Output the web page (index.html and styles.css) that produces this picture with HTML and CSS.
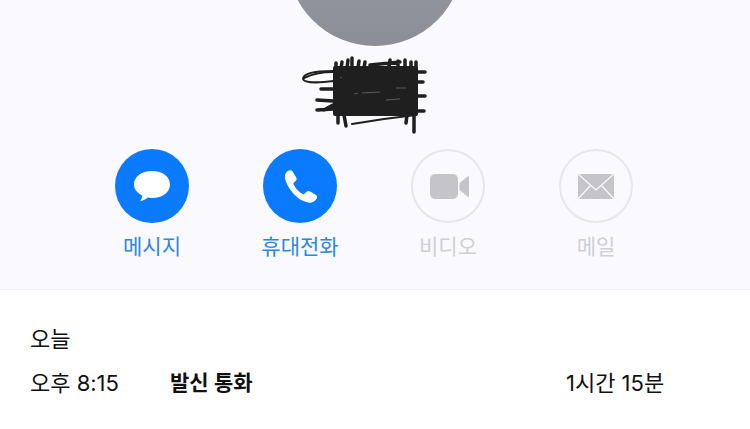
FILE: index.html
```html
<!DOCTYPE html>
<html lang="ko">
<head>
    <meta charset="UTF-8">
    <meta name="viewport" content="width=device-width, initial-scale=1.0">
    <title>통화 기록</title>
    <link rel="stylesheet" href="styles.css">
</head>
<body>
    <div class="contact-header">
        <div class="avatar"></div>
        <svg class="scribble" width="130" height="80" viewBox="0 0 130 80">
            <rect x="33" y="11" width="85" height="50" rx="2" fill="#1f1f1f"/>
            <g fill="none" stroke="#1f1f1f" stroke-width="3.5" stroke-linecap="round">
                <path d="M36 13 L36 8 M41 13 L42 7 M47 13 L48 5 M52 13 L52 3 M58 13 L59 6 M64 13 L65 7 M70 10 L100 7 M89 12 L90 5 M98 12 L98 6 M105 12 L105 5 M111 12 L111 7 M116 13 L116 7"/>
                <path d="M116 17 L125 17 M116 27 L123 27 M116 41 L125 41 M116 56 L124 56"/>
                <path d="M33 34 L21 34 M33 46 L17 45 M33 54 L17 55 M33 50 L24 55"/>
                <path d="M38 60 L38 68 M44 60 L46 71"/>
                <path d="M107 60 L106 68 M114 58 L114 77"/>
            </g>
            <g fill="none" stroke="#1f1f1f" stroke-width="2" stroke-linecap="round">
                <path d="M33 16 C16 16 3 18 3 24 C4 28 18 28 34 26"/>
                <path d="M4 23 C12 19 24 17 33 17"/>
                <path d="M52 69 L84 64 L116 60"/>
            </g>
            <g fill="none" stroke="#6b6b6b" stroke-width="0.8">
                <path d="M40 22 L42 23 M54 39 L58 38 M62 38 L80 37 M96 33 L106 33 M86 45 L100 44"/>
            </g>
        </svg>
        <div class="actions">
            <div class="action">
                <div class="action-icon active">
                    <svg width="40" height="38" viewBox="0 0 40 38">
                        <path d="M20 4 C31 4 38 10 38 17.5 C38 25 31 31 20 31 C18.4 31 17 30.9 15.6 30.6 C13.5 32.6 10.5 34 8 34.2 C9.4 32.5 10.2 30 10.2 28.4 C5 26 2 22 2 17.5 C2 10 9 4 20 4 Z" fill="#fff"/>
                    </svg>
                </div>
                <span class="action-label">메시지</span>
            </div>
            <div class="action">
                <div class="action-icon active">
                    <svg width="40" height="40" viewBox="0 0 36 36">
                        <path d="M7 4.6 C8.2 3.6 10 3.4 11 4.6 L14.6 10.4 C15.3 11.6 15 12.8 14 13.6 L12.4 15 C12 15.4 12 16 12.2 16.5 C14 20.4 16.4 23 20.4 25.2 C21 25.5 21.6 25.4 22 25 L23.6 23.3 C24.5 22.4 25.6 22.2 26.7 22.8 L32.3 26 C33.6 26.8 33.6 28.4 32.8 29.6 C31.2 32 28.6 33.4 26 33 C20 32 14.6 28.4 10.6 23 C6.8 18 4.4 13 4.4 9.4 C4.4 7.6 5.4 5.8 7 4.6 Z" fill="#fff"/>
                    </svg>
                </div>
                <span class="action-label">휴대전화</span>
            </div>
            <div class="action disabled">
                <div class="action-icon">
                    <svg class="video-icon" width="39" height="25" viewBox="0 0 39 25">
                        <rect x="0" y="0" width="28" height="25" rx="5" fill="#c4c4c9"/>
                        <path d="M29.5 9 L37.5 2.4 C38.2 1.9 39 2.3 39 3.2 L39 21.8 C39 22.7 38.2 23.1 37.5 22.6 L29.5 16 Z" fill="#c4c4c9"/>
                    </svg>
                </div>
                <span class="action-label">비디오</span>
            </div>
            <div class="action disabled">
                <div class="action-icon">
                    <svg width="36" height="25" viewBox="0 0 36 25">
                        <rect width="36" height="25" fill="#c4c4c9"/>
                        <path d="M0 0 L18 16 L36 0 M0 25 L12 12 M36 25 L24 12" fill="none" stroke="#f9f9fe" stroke-width="1.3"/>
                    </svg>
                </div>
                <span class="action-label">메일</span>
            </div>
        </div>
    </div>
    <div class="call-history">
        <div class="history-date">오늘</div>
        <div class="history-row">
            <span class="call-time">오후 8:15</span>
            <span class="call-type">발신 통화</span>
            <span class="call-length">1시간 15분</span>
        </div>
    </div>
</body>
</html>
```
FILE: styles.css
```css
body {
    font-family: "Inter", "Noto Sans CJK KR", sans-serif;
    background-color: #fff;
    color: #111;
    margin: 0;
    height: 429px;
    overflow: hidden;
}
.contact-header {
    background-color: #f9f9fe;
    border-bottom: 1px solid #f0f0f4;
    height: 289px;
    overflow: hidden;
    display: flex;
    flex-direction: column;
    align-items: center;
}
.avatar {
    width: 176px;
    height: 176px;
    flex-shrink: 0;
    margin-top: -130px;
    border-radius: 50%;
    background: linear-gradient(#a5a6ad, #8b8d97);
}
.scribble {
    display: block;
    flex-shrink: 0;
    margin-top: 9px;
    margin-right: 20px;
}
.actions {
    display: flex;
    margin-top: 14px;
    margin-right: 2px;
}
.action {
    width: 148px;
    display: flex;
    flex-direction: column;
    align-items: center;
}
.action-icon {
    width: 74px;
    height: 74px;
    box-sizing: border-box;
    border: 2px solid #e6e6eb;
    border-radius: 50%;
    display: flex;
    justify-content: center;
    align-items: center;
}
.action-icon.active {
    background-color: #0a7aff;
    border: none;
}
.video-icon {
    margin-left: 2px;
}
.action-label {
    margin-top: 10px;
    font-size: 21px;
    line-height: 28px;
    color: #2a87e6;
}
.disabled .action-label {
    color: #cfcfd4;
}
.call-history {
    padding: 35px 30px 0;
    font-size: 22px;
}
.history-date {
    line-height: 28px;
}
.history-row {
    display: flex;
    margin-top: 16px;
    line-height: 28px;
}
.call-time {
    width: 140px;
}
.call-type {
    width: 396px;
    font-size: 21px;
    font-weight: 600;
}
```
